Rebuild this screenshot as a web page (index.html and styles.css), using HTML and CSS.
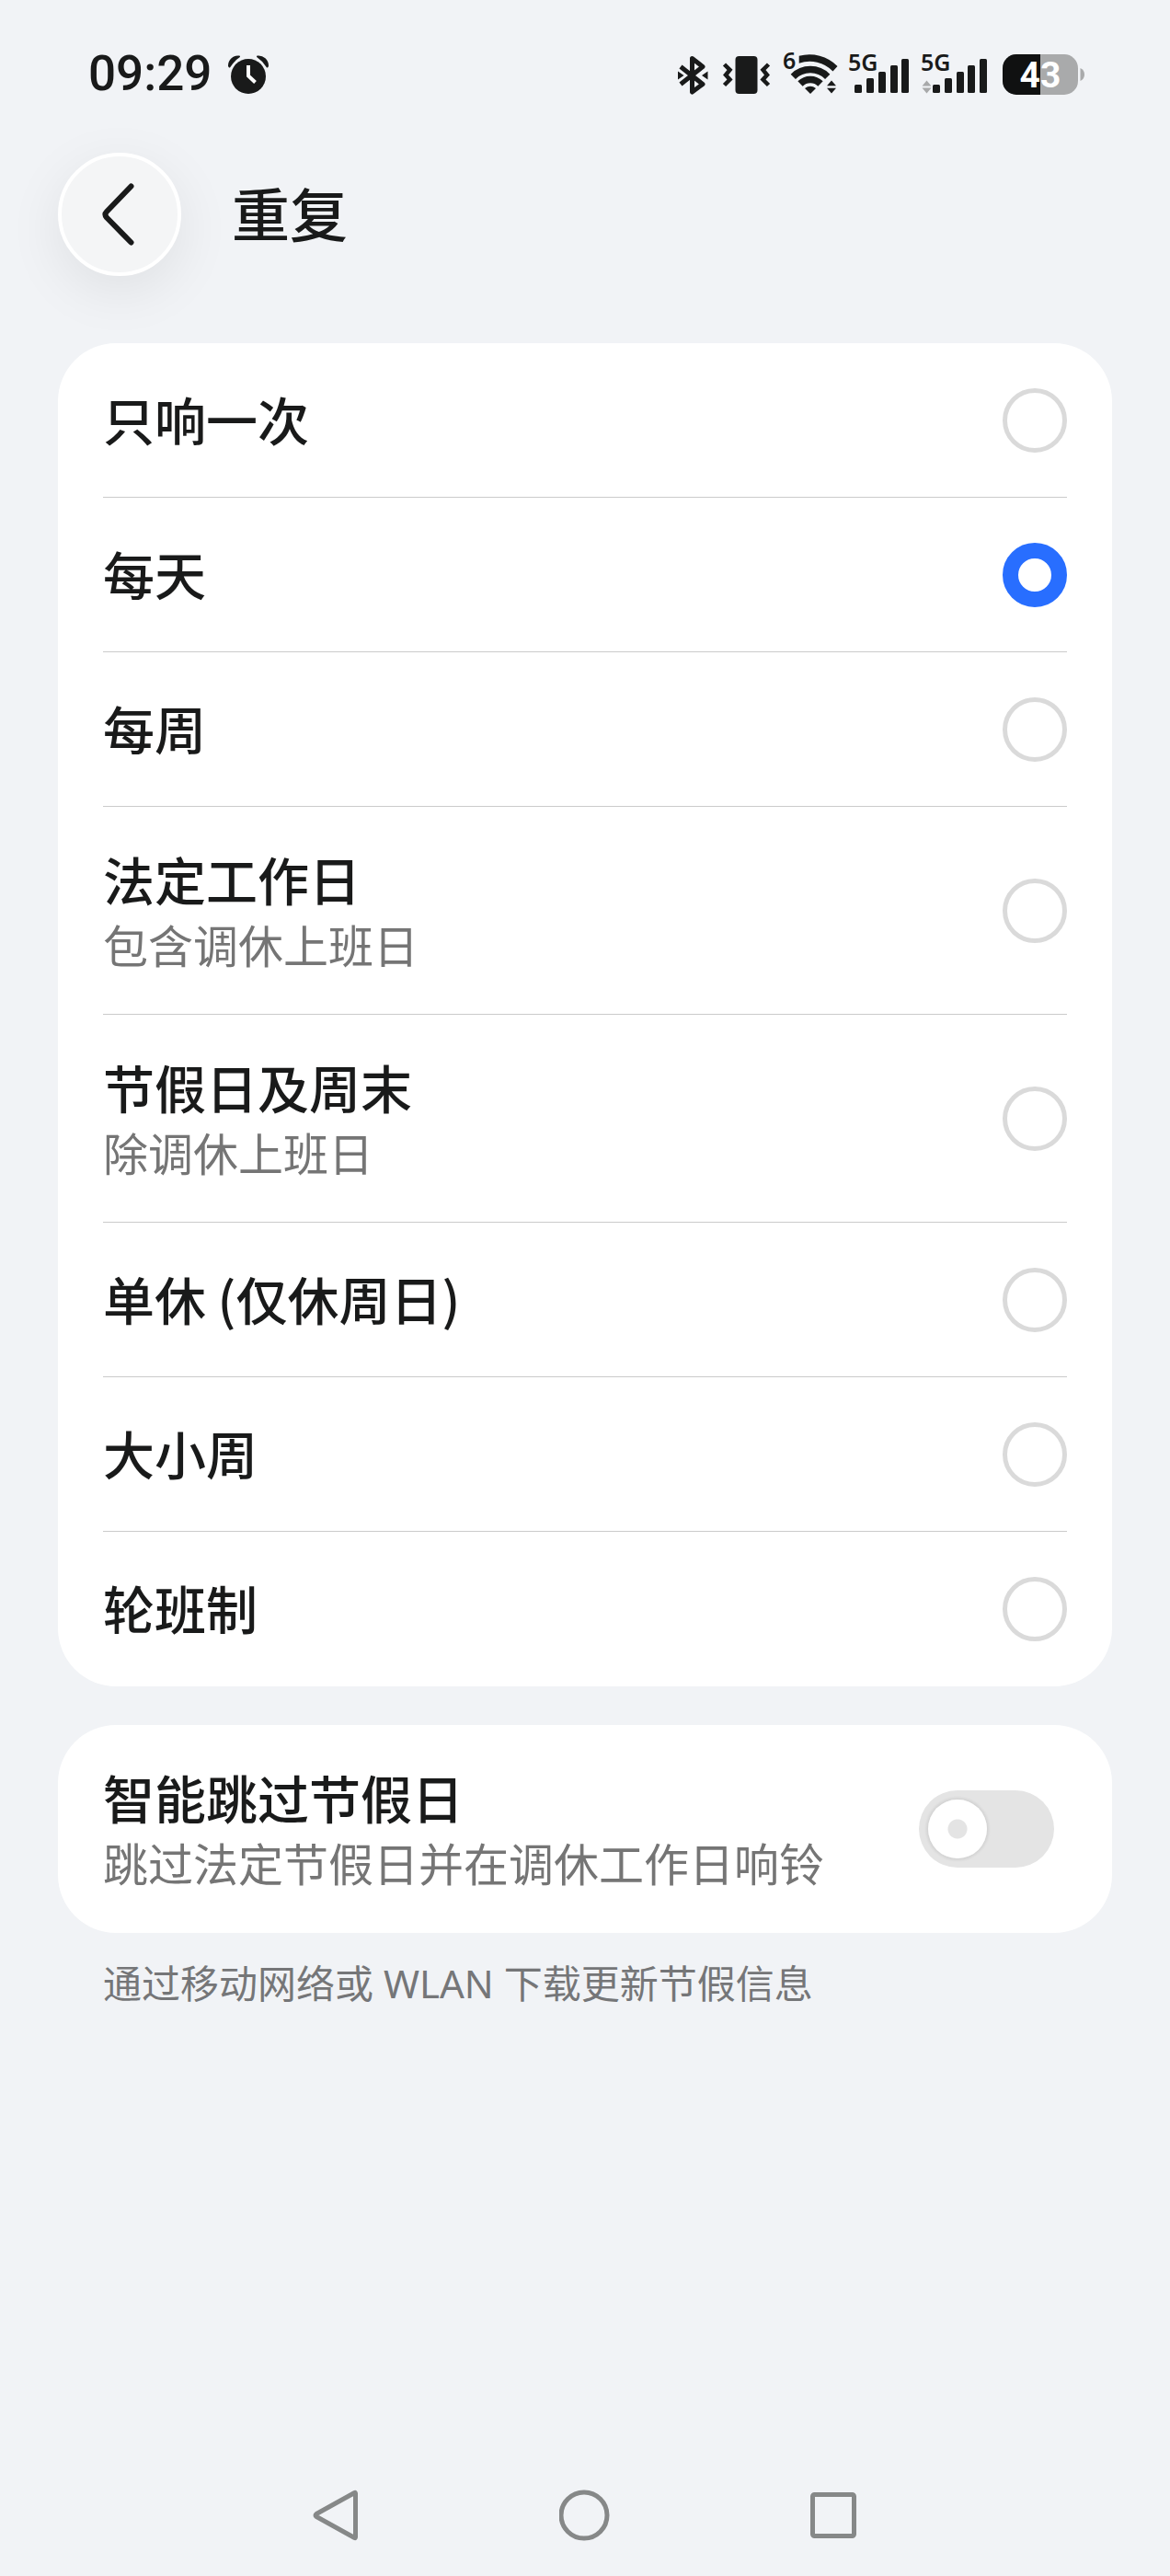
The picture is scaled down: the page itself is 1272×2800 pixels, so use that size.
FILE: index.html
```html
<!DOCTYPE html>
<html lang="zh-CN">
<head>
    <meta charset="UTF-8">
    <meta name="viewport" content="width=device-width, initial-scale=1.0">
    <title>重复</title>
    <link rel="stylesheet" href="styles.css">
</head>
<body>
    <div class="screen">
        <div class="status-bar">
            <div class="status-left">
                <span class="time">09:29</span>
                <svg width="44" height="52" viewBox="0 0 44 52">
                    <circle cx="22" cy="29" r="19" fill="#191a1a"/>
                    <path d="M1 17.500 A10 10 0 0 1 12 7.500 Q6 11.500 1.500 18.500Z M43 17.500 A10 10 0 0 0 32 7.500 Q38 11.500 42.500 18.500Z" fill="#191a1a" stroke="#191a1a" stroke-width="2" stroke-linejoin="round"/>
                    <path d="M22 17 V28.500 L29.500 35.500" fill="none" stroke="#fff" stroke-width="4"/>
                </svg>
            </div>
            <div class="status-right">
                <!-- bluetooth -->
                <svg width="36" height="52" viewBox="0 0 36 52">
                    <path d="M3 18.500 L27 37.500 L15.500 46 V9.500 L27 18.500 L3 37.500" fill="none" stroke="#191a1a" stroke-width="5" stroke-linejoin="round"/>
                    <path d="M0 23.500 L6.500 28 L0 32.500Z M32.500 23.500 L26 28 L32.500 32.500Z" fill="#191a1a"/>
                </svg>
                <!-- vibrate -->
                <svg width="54" height="52" viewBox="0 0 54 52">
                    <rect x="14.500" y="7" width="24" height="41" rx="4" fill="#191a1a"/>
                    <path d="M2.500 16 L8.500 22 L4 27.500 L8.500 32.500 L2.500 38.500 M50.500 16 L44.500 22 L49 27.500 L44.500 32.500 L50.500 38.500" fill="none" stroke="#191a1a" stroke-width="4.500"/>
                </svg>
                <!-- wifi 6 -->
                <svg class="status-text" width="60" height="52" viewBox="0 0 60 52">
                    <text x="0" y="21" font-size="25">6</text>
                    <path d="M17.700 6.800 A43 43 0 0 1 59.500 18 L54.500 23.500 A35 35 0 0 0 17.700 14.800Z" fill="#191a1a"/>
                    <path d="M11.300 29.300 A26.500 26.500 0 0 1 48.700 29.300 M19 37 A15.500 15.500 0 0 1 41 37" fill="none" stroke="#191a1a" stroke-width="7.500"/>
                    <path d="M24 42 Q30 37.500 36 42 L30 48Z" fill="#191a1a"/>
                    <path d="M48 39.300 L53 33.500 L58 39.300Z M48 41.700 L53 47.500 L58 41.700Z" fill="#191a1a"/>
                </svg>
                <!-- sim 1 -->
                <svg class="status-text" width="67" height="52" viewBox="0 0 67 52">
                    <text x="-1" y="23" font-size="25">5G</text>
                    <g fill="#191a1a">
                        <rect x="6" y="38" width="8" height="9" rx="1.500"/>
                        <rect x="19" y="31" width="8" height="16" rx="1.500"/>
                        <rect x="32" y="24" width="8" height="23" rx="1.500"/>
                        <rect x="45" y="17" width="8" height="30" rx="1.500"/>
                        <rect x="57" y="10" width="8" height="37" rx="1.500"/>
                    </g>
                </svg>
                <!-- sim 2 -->
                <svg class="status-text" width="76" height="52" viewBox="0 0 76 52">
                    <text x="-1" y="23" font-size="25">5G</text>
                    <path d="M0.500 39.500 L5.500 33.500 L10.500 39.500Z M0.500 41.500 L5.500 47.500 L10.500 41.500Z" fill="#a8a9aa"/>
                    <g fill="#191a1a">
                        <rect x="12" y="38" width="8" height="9" rx="1.500"/>
                        <rect x="25" y="31" width="8" height="16" rx="1.500"/>
                        <rect x="38" y="24" width="8" height="23" rx="1.500"/>
                        <rect x="50" y="17" width="8" height="30" rx="1.500"/>
                        <rect x="63" y="10" width="8" height="37" rx="1.500"/>
                    </g>
                </svg>
                <!-- battery -->
                <svg class="battery" width="90" height="52" viewBox="0 0 90 52">
                    <rect x="0" y="5" width="82" height="44" rx="15" fill="#a9aaab"/>
                    <path d="M41 5 H15 A15 15 0 0 0 0 20 V34 A15 15 0 0 0 15 49 H41Z" fill="#101111"/>
                    <path d="M84.500 20 Q89 22 89 27 Q89 32 84.500 34Z" fill="#a9aaab"/>
                    <text x="41" y="41" font-size="39" text-anchor="middle">43</text>
                </svg>
            </div>
        </div>

        <header class="header">
            <button class="back" type="button" aria-label="返回">
                <svg width="48" height="72" viewBox="0 0 48 72">
                    <path d="M36.500 5.500 L10 33 Q7 36 10 39.500 L36.500 66.500" fill="none" stroke="#191a1a" stroke-width="6" stroke-linecap="round" stroke-linejoin="round"/>
                </svg>
            </button>
            <h1>重复</h1>
        </header>

        <main>
            <div class="card" role="radiogroup" aria-label="重复">
                <label class="row">
                    <span class="text">
                        <span class="name">只响一次</span>
                    </span>
                    <input class="radio" type="radio" name="repeat">
                </label>
                <label class="row">
                    <span class="text">
                        <span class="name">每天</span>
                    </span>
                    <input class="radio" type="radio" name="repeat" checked>
                </label>
                <label class="row">
                    <span class="text">
                        <span class="name">每周</span>
                    </span>
                    <input class="radio" type="radio" name="repeat">
                </label>
                <label class="row row-tall">
                    <span class="text">
                        <span class="name">法定工作日</span>
                        <span class="desc">包含调休上班日</span>
                    </span>
                    <input class="radio" type="radio" name="repeat">
                </label>
                <label class="row row-tall">
                    <span class="text">
                        <span class="name">节假日及周末</span>
                        <span class="desc">除调休上班日</span>
                    </span>
                    <input class="radio" type="radio" name="repeat">
                </label>
                <label class="row">
                    <span class="text">
                        <span class="name">单休 (仅休周日)</span>
                    </span>
                    <input class="radio" type="radio" name="repeat">
                </label>
                <label class="row">
                    <span class="text">
                        <span class="name">大小周</span>
                    </span>
                    <input class="radio" type="radio" name="repeat">
                </label>
                <label class="row">
                    <span class="text">
                        <span class="name">轮班制</span>
                    </span>
                    <input class="radio" type="radio" name="repeat">
                </label>
            </div>

            <div class="card">
                <label class="row row-tall">
                    <span class="text">
                        <span class="name">智能跳过节假日</span>
                        <span class="desc">跳过法定节假日并在调休工作日响铃</span>
                    </span>
                    <input class="switch" type="checkbox">
                </label>
            </div>
            <p class="hint">通过移动网络或 WLAN 下载更新节假信息</p>
        </main>

        <nav class="nav-bar">
            <button type="button" aria-label="后退">
                <svg width="56" height="56" viewBox="0 0 56 56">
                    <path d="M48.500 3.500 Q49.500 3 49.500 4.500 V51.500 Q49.500 53 48.500 52.500 L7 29.500 Q5 28 7 26.500Z" fill="none" stroke="#868888" stroke-width="5" stroke-linejoin="round"/>
                </svg>
            </button>
            <button type="button" aria-label="主屏幕">
                <svg width="56" height="56" viewBox="0 0 56 56">
                    <circle cx="27" cy="28" r="25" fill="none" stroke="#868888" stroke-width="5"/>
                </svg>
            </button>
            <button type="button" aria-label="最近任务">
                <svg width="56" height="56" viewBox="0 0 56 56">
                    <rect x="4.500" y="5.500" width="45" height="45" rx="2" fill="none" stroke="#868888" stroke-width="5"/>
                </svg>
            </button>
        </nav>
    </div>
</body>
</html>
```

FILE: styles.css
```css
* {
    box-sizing: border-box;
}

body {
    margin: 0;
    background-color: #f1f3f6;
    color: #191a1a;
    font-family: "Noto Sans CJK SC", sans-serif;
}

button {
    padding: 0;
    border: none;
    background: none;
    cursor: pointer;
}

svg {
    display: block;
}

.screen {
    display: flex;
    flex-direction: column;
    min-height: 100vh;
}

/* status bar */
.status-bar {
    display: flex;
    justify-content: space-between;
    align-items: center;
    height: 160px;
    padding: 0 92px 0 96px;
}

.status-left {
    display: flex;
    align-items: center;
    gap: 18px;
}

.status-right {
    display: flex;
    align-items: center;
    gap: 12px;
}

.time {
    font-family: Roboto, sans-serif;
    font-size: 53px;
    font-weight: 500;
    line-height: 60px;
}

.status-text {
    overflow: visible;
    font-family: "Noto Sans", sans-serif;
    font-weight: 600;
    fill: #191a1a;
}

.battery {
    font-family: Roboto, sans-serif;
    font-weight: 700;
    fill: #fff;
}

/* title */
.header {
    display: flex;
    align-items: center;
    gap: 55px;
    padding: 6px 63px 73px;
}

.back {
    display: flex;
    align-items: center;
    justify-content: center;
    width: 134px;
    height: 134px;
    border: 4px solid #fff;
    border-radius: 50%;
    background-color: #f4f5f6;
    box-shadow: 0 16px 60px rgba(0, 0, 0, 0.08);
}

h1 {
    margin: 0;
    padding-bottom: 6px;
    font-size: 63px;
    font-weight: 500;
    line-height: 84px;
}

/* lists */
main {
    padding: 0 63px;
}

.card {
    padding: 0 49px;
    border-radius: 63px;
    background-color: #fff;
}

.card + .card {
    margin-top: 42px;
}

.row {
    display: flex;
    align-items: center;
    justify-content: space-between;
    min-height: 168px;
    border-bottom: 1px solid #cbcbcb;
}

.row:last-child {
    border-bottom: none;
}

.row-tall {
    min-height: 226px;
}

.text {
    display: flex;
    flex-direction: column;
    padding-bottom: 4px;
}

.name {
    font-size: 56px;
    font-weight: 500;
    line-height: 76px;
}

.desc {
    color: #757575;
    font-size: 49px;
    line-height: 66px;
}

.radio {
    appearance: none;
    flex: none;
    width: 70px;
    height: 70px;
    margin: 0;
    border: 5px solid #dadada;
    border-radius: 50%;
    background-color: #fff;
}

.radio:checked {
    border: 17px solid #286eff;
}

.switch {
    appearance: none;
    display: flex;
    align-items: center;
    flex: none;
    width: 147px;
    height: 84px;
    margin: 0 14px 0 0;
    padding: 0 10px;
    border-radius: 42px;
    background-color: #e4e4e4;
}

.switch::before {
    content: "";
    width: 64px;
    height: 64px;
    border-radius: 50%;
    background: radial-gradient(circle, #e4e4e4 10px, #fff 11px);
    box-shadow: 0 0 3px 2px rgba(0, 0, 0, 0.08);
}

.switch:checked {
    justify-content: flex-end;
    background-color: #286eff;
}

.hint {
    margin: 27px 49px;
    color: #757678;
    font-family: "Noto Sans", "Noto Sans CJK SC", sans-serif;
    font-size: 42px;
    line-height: 56px;
}

/* system navigation */
.nav-bar {
    display: flex;
    align-items: center;
    justify-content: center;
    gap: 215px;
    height: 132px;
    margin-top: auto;
}
```
